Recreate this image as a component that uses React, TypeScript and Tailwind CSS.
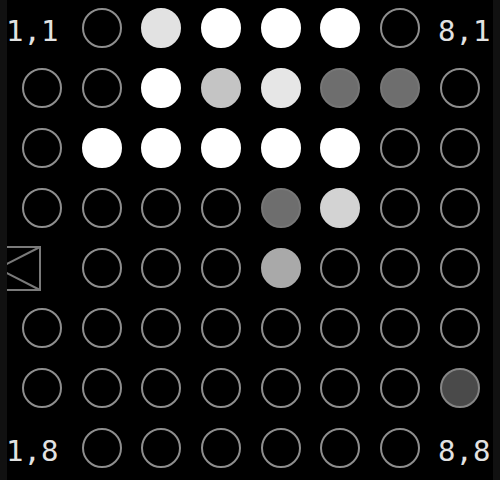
import React from 'react';

type Cell =
  | { kind: 'label'; text: string; side: 'left' | 'right' }
  | { kind: 'icon' }
  | { kind: 'dot'; cls: string };

const off = 'border-2 border-[#8e8e8e] bg-transparent';
const white = 'border-2 border-white bg-white';
const light = 'border-2 border-[#e2e2e2] bg-[#e2e2e2]';
const pale = 'border-2 border-[#e6e6e6] bg-[#e6e6e6]';
const silver = 'border-2 border-[#c4c4c4] bg-[#c4c4c4]';
const soft = 'border-2 border-[#d3d3d3] bg-[#d3d3d3]';
const mid = 'border-2 border-[#aaaaaa] bg-[#a9a9a9]';
const dim = 'border-2 border-[#767676] bg-[#6e6e6e]';
const dark = 'border-2 border-[#858585] bg-[#4a4a4a]';

const o: Cell = { kind: 'dot', cls: off };
const d = (cls: string): Cell => ({ kind: 'dot', cls });

const rows: Cell[][] = [
  [{ kind: 'label', text: '1,1', side: 'left' }, o, d(light), d(white), d(white), d(white), o, { kind: 'label', text: '8,1', side: 'right' }],
  [o, o, d(white), d(silver), d(pale), d(dim), d(dim), o],
  [o, d(white), d(white), d(white), d(white), d(white), o, o],
  [o, o, o, o, d(dim), d(soft), o, o],
  [{ kind: 'icon' }, o, o, o, d(mid), o, o, o],
  [o, o, o, o, o, o, o, o],
  [o, o, o, o, o, o, o, d(dark)],
  [{ kind: 'label', text: '1,8', side: 'left' }, o, o, o, o, o, o, { kind: 'label', text: '8,8', side: 'right' }],
];

function GridCell({ cell }: { cell: Cell }) {
  if (cell.kind === 'label') {
    return (
      <div
        className={
          cell.side === 'left'
            ? 'flex items-center justify-start -ml-[6px] pt-[6px]'
            : 'flex items-center justify-end -mr-[1px] pt-[6px]'
        }
      >
        <span
          className="text-[29px] leading-none text-[#e2e2e2]"
          style={{ fontFamily: "'DejaVu Sans Mono', monospace" }}
        >
          {cell.text}
        </span>
      </div>
    );
  }
  if (cell.kind === 'icon') {
    return (
      <div className="flex items-center justify-start -ml-[14px]">
        <svg width="43" height="45" viewBox="0 0 43 45" fill="none" stroke="#7a7a7a" strokeWidth="2">
          <path d="M0 1 H42 V44 H0" />
          <path d="M42 1 L0 22.5 L42 44" />
        </svg>
      </div>
    );
  }
  return (
    <div className="flex items-center justify-center">
      <div className={`w-[40px] h-[40px] rounded-full ${cell.cls}`} />
    </div>
  );
}

export default function App() {
  return (
    <div className="w-[500px] h-[480px] bg-black flex overflow-hidden">
      <div className="w-[7px] bg-[#111111]" />
      <div className="flex-1 overflow-hidden">
        <div className="grid grid-cols-[repeat(8,59.7px)] grid-rows-[repeat(8,60px)] ml-[5px] -mt-[2px]">
          {rows.map((row, r) =>
            row.map((cell, c) => <GridCell key={`${r}-${c}`} cell={cell} />)
          )}
        </div>
      </div>
      <div className="w-[7px] bg-[#111111]" />
    </div>
  );
}
